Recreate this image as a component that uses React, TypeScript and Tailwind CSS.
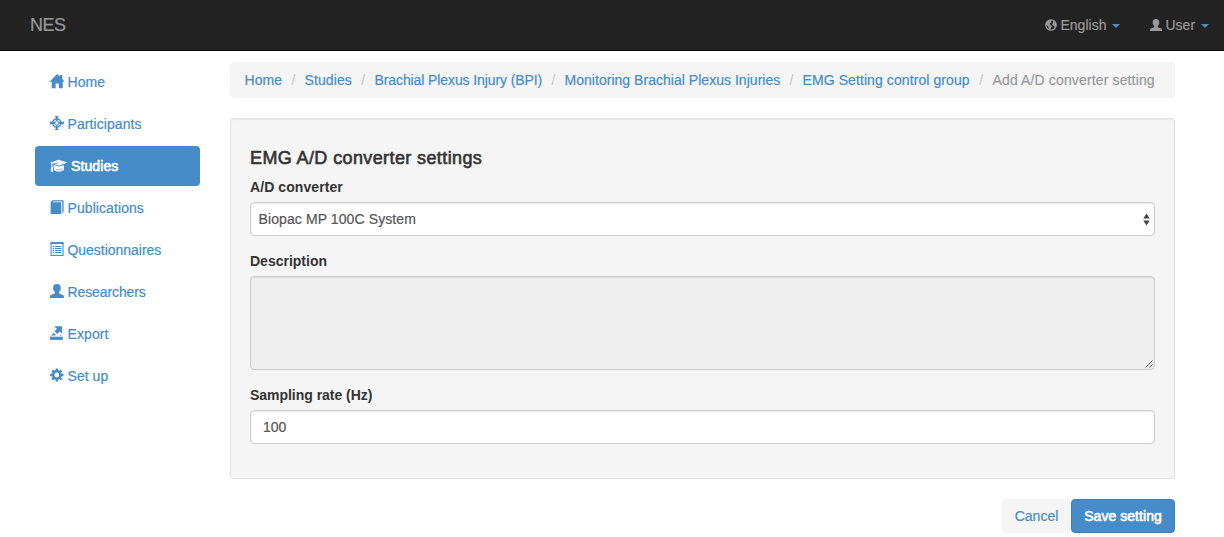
import type { ReactNode } from 'react';

type IconProps = { className?: string };

function HomeIcon() {
  return (
    <svg className="h-[15px] w-[15px] overflow-visible" viewBox="0 0 15 15" fill="currentColor">
      <path d="M7.1 0L9.8 2.6V1H12.3V5L14.6 7.8H12.7V14.2H8.8V9.5H5.6V14.2H1.7V7.8H-.4Z" />
    </svg>
  );
}

function CrosshairIcon() {
  return (
    <svg className="h-[15px] w-[15px]" viewBox="0 0 15 15" fill="none" stroke="currentColor">
      <circle cx="6.8" cy="7" r="4.1" strokeWidth="1.5" />
      <path d="M6.8 .5V5.6M6.8 8.4V13.5M.2 7H5.4M8.2 7H13.4" strokeWidth="1.9" />
      <path d="M5.2 .6H8.4M5.2 13.4H8.4M.4 5.4V8.6M13.2 5.4V8.6" strokeWidth="1.2" />
      <path d="M4.4 4.6L5.9 6.1M9.2 4.6L7.7 6.1M4.4 9.4L5.9 7.9M9.2 9.4L7.7 7.9" strokeWidth=".9" />
    </svg>
  );
}

function CapIcon() {
  return (
    <svg className="h-[14px] w-[18px]" viewBox="0 0 18 14" fill="currentColor">
      <path d="M0 3.7L8.6 .8L17.4 3.6L9.2 6.4L4 5L8.7 4.2L8.6 3.6L2.4 4.8V8L3 8.7V12.8H.9V8.7L1.4 8V4.5Z" />
      <path d="M3.9 6L9 7.4L14 5.9V10.8C11.8 13.1 6.8 13.1 3.9 11V8.4L3.4 8Z" />
      <path d="M5.6 10.3Q9 11.7 12.8 9.8" fill="none" stroke="#468cc8" strokeWidth=".6" />
    </svg>
  );
}

function BookIcon() {
  return (
    <svg className="h-[15px] w-[15px]" viewBox="0 0 15 15" fill="currentColor">
      <path d="M2.5 .2H13.6V11.8L12.3 13.2V1.4H3.2L2.4 2.2H11.3V13.9H1.2L.6 13.3V2Z" />
    </svg>
  );
}

function ListIcon() {
  return (
    <svg className="h-[15px] w-[15px]" viewBox="0 0 15 15" fill="none" stroke="currentColor">
      <path d="M1.1 1V13.5H13V1" strokeWidth="1.1" />
      <path d="M.5 1H13.6" strokeWidth="2" />
      <path d="M5 4.5H11.5M5 6.5H11.5M5 8.5H11.5M5 10.5H11.5" strokeWidth="1" />
      <path d="M2.7 4.5H4M2.7 6.5H4M2.7 8.5H4M2.7 10.5H4" strokeWidth="1" />
    </svg>
  );
}

function PersonIcon({ className = 'h-[15px] w-[15px]' }: IconProps) {
  return (
    <svg className={className} viewBox="0 0 15 15" fill="currentColor">
      <path d="M6.9 .1C9.2 .1 10.6 1.2 10.6 3.1L10.5 4.2C11.1 4.4 10.9 5.7 10.2 6C9.9 7.1 9.1 7.8 8.9 8.3V9.3C9.7 10.1 12.5 10.6 13.4 11.3C13.9 11.8 14 12.9 14 13.9H-.1C-.1 12.9 0 11.8 .5 11.3C1.4 10.6 4.1 10.1 4.9 9.3V8.3C4.7 7.8 3.9 7.1 3.6 6C2.9 5.7 2.7 4.4 3.3 4.2L3.2 3.1C3.2 1.2 4.6 .1 6.9 .1Z" />
    </svg>
  );
}

function ExportIcon() {
  return (
    <svg className="h-[15px] w-[15px]" viewBox="0 0 15 15" fill="currentColor">
      <path d="M4 .2H12V7.6L9.7 5.4L7.2 7.9L4.6 5.2L6.9 2.8Z" />
      <path d="M2.8 6.1L5.8 8.8L5.4 9.6H.7L3.4 7.5ZM10.2 8.4L11.8 9.7H9.8Z" />
      <path d="M-.2 10.7H12.8V13.9H-.2Z" />
    </svg>
  );
}

function GearIcon() {
  return (
    <svg className="h-[15px] w-[15px]" viewBox="0 0 15 15" fill="none" stroke="currentColor">
      <circle cx="6.8" cy="7" r="3.7" strokeWidth="2.5" />
      <path d="M6.8 .4V3M6.8 11V13.6M.2 7H2.8M10.8 7H13.4M2.2 2.4L3.8 4M9.8 10L11.4 11.6M11.4 2.4L9.8 4M3.8 10L2.2 11.6" strokeWidth="2.3" />
    </svg>
  );
}

function GlobeIcon() {
  return (
    <svg className="h-3 w-3" viewBox="0 0 12 12" fill="none">
      <circle cx="6" cy="6" r="5.2" stroke="currentColor" strokeWidth="1.3" />
      <path fill="currentColor" d="M1.2 3.6L3.4 1.2L5.2 .7L6.8 1.6L5.9 2.3L6.6 3.2L5.1 4.1L4.4 5.2L5.8 5.9L7 7.2L6 8.8L5.2 11L3.8 10.2L3.4 7.7L2 6.4L.8 6ZM8.1 1.8L10.1 3L11.3 5.1L10.8 7.9L9.7 9.1L9.2 7.1L7.8 6.6L7.1 5.1L8.2 3.9L7.6 2.9Z" />
    </svg>
  );
}

function Caret() {
  return (
    <svg className="mt-px h-1 w-2 text-[#468cc8]" viewBox="0 0 8 4" fill="currentColor">
      <path d="M0 0H8L4 4Z" />
    </svg>
  );
}

const navItems: { label: string; icon: ReactNode; text: string }[] = [
  { label: 'Home', icon: <HomeIcon />, text: 'tracking-[0.1px]' },
  { label: 'Participants', icon: <CrosshairIcon />, text: 'tracking-[0.08px]' },
  { label: 'Studies', icon: <CapIcon />, text: 'ml-[0.5px] tracking-[0.1px] [-webkit-text-stroke:0.6px_white]' },
  { label: 'Publications', icon: <BookIcon />, text: 'tracking-[0.08px]' },
  { label: 'Questionnaires', icon: <ListIcon />, text: 'tracking-[-0.03px]' },
  { label: 'Researchers', icon: <PersonIcon />, text: 'tracking-[-0.1px]' },
  { label: 'Export', icon: <ExportIcon />, text: 'tracking-[0.1px]' },
  { label: 'Set up', icon: <GearIcon />, text: 'tracking-[0.05px]' },
];

const crumbs = [
  { label: 'Home', text: 'w-[60px] tracking-[0.1px]' },
  { label: 'Studies', text: 'w-[70px] tracking-[0.1px]' },
  { label: 'Brachial Plexus Injury (BPI)', text: 'w-[190px] tracking-[-0.1px]' },
  { label: 'Monitoring Brachial Plexus Injuries', text: 'w-[238px] tracking-[0.03px]' },
  { label: 'EMG Setting control group', text: 'w-[190px] tracking-[0.09px]' },
];

const control =
  'w-full rounded border border-[#ccc] shadow-[inset_0_1px_1px_rgba(0,0,0,0.075)] text-[#555]';

export default function App() {
  return (
    <div className="h-[537px] overflow-hidden bg-white font-['Liberation_Sans',Arial,sans-serif] text-sm leading-5 text-[#333] [-webkit-text-stroke-width:0.2px]">
      <header className="flex h-[51px] items-center justify-between border-b border-[#080808] bg-[#222] pl-[30px] pr-[15px] text-[#999]">
        <a className="text-[18px] tracking-[-0.5px]">NES</a>
        <div className="flex items-center">
          <a className="flex items-center">
            <GlobeIcon />
            <span className="ml-[3.5px] w-[46.5px] whitespace-nowrap">English</span>
            <span className="ml-[5px]"><Caret /></span>
          </a>
          <a className="ml-[30px] flex items-center">
            <PersonIcon className="h-[13px] w-[13px]" />
            <span className="ml-[2.5px] w-[30.5px] whitespace-nowrap">User</span>
            <span className="ml-[5px]"><Caret /></span>
          </a>
        </div>
      </header>

      <div className="flex pt-[11px]">
        <nav className="ml-[35px] flex w-[165px] flex-col gap-0.5">
          {navItems.map((item) => (
            <a
              key={item.label}
              className={
                item.label === 'Studies'
                  ? 'flex h-10 items-center gap-[2.5px] rounded bg-[#468cc8] pl-[15px] text-white'
                  : 'flex h-10 items-center gap-[2.5px] pl-[15px] text-[#468cc8]'
              }
            >
              <span className={item.label === 'Studies' ? '' : 'pb-px'}>{item.icon}</span>
              <span className={item.text}>{item.label}</span>
            </a>
          ))}
        </nav>

        <main className="ml-[30px] w-[945px]">
          <ol className="flex h-9 items-center whitespace-nowrap rounded bg-[#f5f5f5] pl-[14.5px]">
            {crumbs.map((crumb) => (
              <li key={crumb.label} className={`${crumb.text} flex text-[#468cc8]`}>
                {crumb.label}
                <span className="flex-1 text-center text-[#ccc]">/</span>
              </li>
            ))}
            <li className="tracking-[0.14px] text-[#999]">Add A/D converter setting</li>
          </ol>

          <section className="mt-5 h-[361px] rounded border border-[#e3e3e3] bg-[#f5f5f5] px-[19px] pt-[29px] shadow-[inset_0_1px_1px_rgba(0,0,0,0.05)]">
            <h4 className="text-[18px] leading-5 tracking-[0.39px] [-webkit-text-stroke:0.6px_#333]">EMG A/D converter settings</h4>
            <label className="mt-[9px] block font-bold tracking-[0.08px] [-webkit-text-stroke-width:0px]">A/D converter</label>
            <div className={`${control} mt-[5px] flex h-[34px] items-center justify-between bg-white pl-[7.5px] pr-1`}>
              <span className="tracking-[0.1px]">Biopac MP 100C System</span>
              <svg className="h-[13px] w-[7px]" viewBox="0 0 7 13" fill="#444">
                <path d="M3.5 0.5L6.7 5.5H.3ZM3.5 12.5L6.7 7.5H.3Z" />
              </svg>
            </div>
            <label className="mt-[15px] block font-bold [-webkit-text-stroke-width:0px]">Description</label>
            <div className={`${control} mt-[5px] flex h-[94px] items-end justify-end bg-[#eee]`}>
              <svg className="mb-px mr-px h-2 w-2" viewBox="0 0 8 8" fill="none" stroke="#555" strokeWidth=".9">
                <path d="M.5 7.5L7.5 .5M4.5 7.5L7.5 4.5" />
              </svg>
            </div>
            <label className="mt-[15px] block font-bold tracking-[-0.03px] [-webkit-text-stroke-width:0px]">Sampling rate (Hz)</label>
            <div className={`${control} mt-[5px] flex h-[34px] items-center bg-white px-3`}>100</div>
          </section>

          <div className="mt-5 flex justify-end">
            <button className="h-[34px] w-[69px] rounded bg-[#f5f5f5] text-[#468cc8]">Cancel</button>
            <button className="h-[34px] w-[104px] whitespace-nowrap rounded border border-[#3b7fbb] bg-[#468cc8] text-white tracking-[0.05px] [-webkit-text-stroke:0.6px_white]">
              Save setting
            </button>
          </div>
        </main>
      </div>
    </div>
  );
}
